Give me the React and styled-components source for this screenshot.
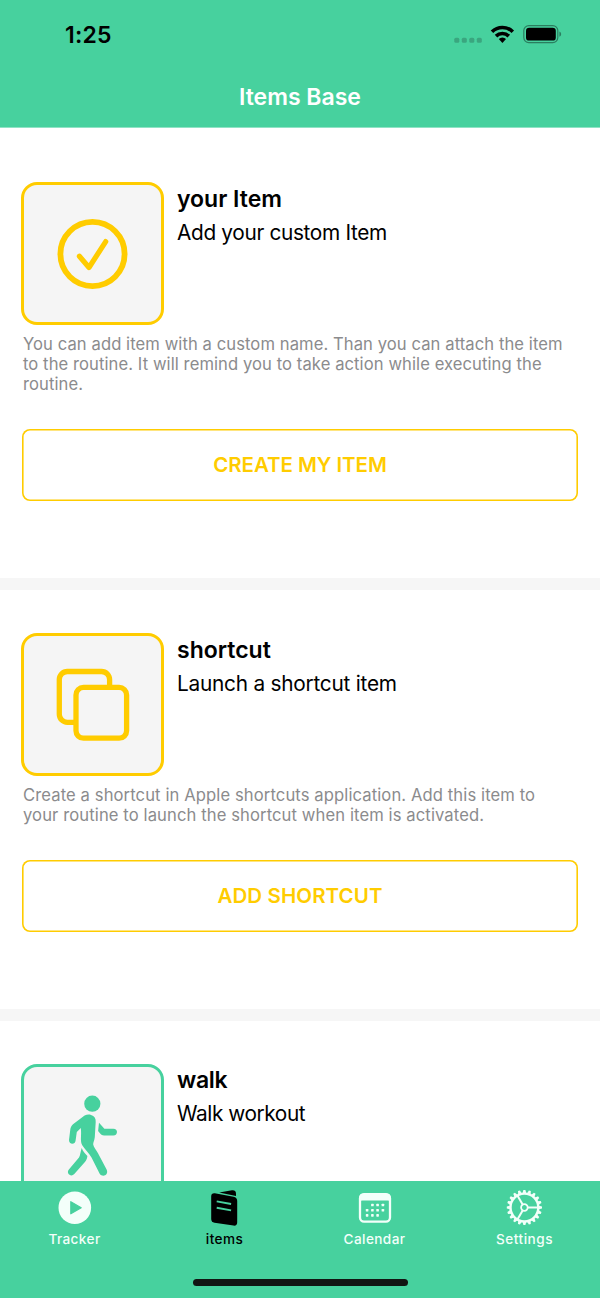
import React from "react";
import styled, { createGlobalStyle } from "styled-components";

const GREEN = "#47d19e";
const YELLOW = "#ffcc00";

const GlobalStyle = createGlobalStyle`
  * { box-sizing: border-box; }
  body { margin: 0; background: #fff; font-family: Inter, "Liberation Sans", sans-serif; }
`;

const Screen = styled.div`
  width: 600px;
  height: 1298px;
  display: flex;
  flex-direction: column;
  overflow: hidden;
  background: #fff;
`;

const Header = styled.header`
  flex: none;
  height: 128px;
  border-bottom: 1px solid #90e3c5;
  background: ${GREEN};
`;

const StatusBar = styled.div`
  height: 68px;
  padding: 0 38px 0 65px;
  display: flex;
  align-items: center;
  justify-content: space-between;
`;

const Time = styled.span`
  padding-top: 2px;
  font-size: 23px;
  line-height: 28px;
  font-weight: 600;
  letter-spacing: 0.2px;
`;

const StatusIcons = styled.svg`
  display: block;
  width: 110px;
  height: 24px;
`;

const NavTitle = styled.h1`
  margin: 0;
  padding-top: 15px;
  text-align: center;
  color: #fff;
  font-size: 23px;
  line-height: 28px;
  font-weight: 600;
  letter-spacing: 0;
`;

const List = styled.main`
  flex: 1;
  min-height: 0;
  overflow: hidden;
  padding-top: 11px;
`;

const Section = styled.section`
  padding: 43px 21px 77px;
  border-bottom: 12px solid #f6f6f6;
`;

const Summary = styled.div`
  display: flex;
  gap: 13px;
`;

const Tile = styled.div`
  flex: none;
  width: 143px;
  height: 143px;
  border: 3px solid ${(p) => p.$color};
  border-radius: 16px;
  background: #f5f5f5;
  color: ${(p) => p.$color};
  svg { display: block; width: 137px; height: 137px; }
`;

const Titles = styled.div`
  padding-top: ${(p) => p.$top || "2px"};
  white-space: nowrap;
`;

const Name = styled.h2`
  margin: 0;
  font-size: 23px;
  line-height: 30px;
  font-weight: 600;
  letter-spacing: ${(p) => p.$track || "0"};
`;

const Subtitle = styled.p`
  margin: 4.5px 0 0;
  font-size: 20.8px;
  line-height: 28px;
  letter-spacing: ${(p) => p.$track || "0"};
`;

const Description = styled.p`
  margin: 9px 0 35px;
  padding-left: 2px;
  color: #8b8b8d;
  font-size: 16.6px;
  line-height: 20px;
  letter-spacing: ${(p) => p.$track || "0"};
  white-space: nowrap;
`;

const Line = styled.span`
  display: block;
`;

const ActionButton = styled.button`
  display: block;
  width: 556px;
  height: 72px;
  margin-left: 1px;
  padding: 0;
  border: none;
  border-radius: 8px;
  box-shadow: inset 0 0 0 1.6px ${YELLOW};
  background: #fff;
  color: ${YELLOW};
  font: 600 20.5px/28px Inter, sans-serif;
  letter-spacing: ${(p) => p.$track || "0"};
`;

const TabBar = styled.nav`
  flex: none;
  height: 117px;
  background: ${GREEN};
`;

const Tabs = styled.div`
  display: grid;
  grid-template-columns: repeat(4, 150px);
  height: 98px;
`;

const Tab = styled.div`
  display: flex;
  flex-direction: column;
  align-items: center;
  padding-top: 6px;
  color: ${(p) => (p.$active ? "#000" : "#f3fffa")};
  svg { display: block; width: 40px; height: 40px; }
`;

const TabLabel = styled.span`
  margin: 3px 1px 0 0;
  font-size: 13.6px;
  line-height: 18px;
  font-weight: 500;
  letter-spacing: ${(p) => p.$track || "0.4px"};
`;

const HomeIndicator = styled.div`
  width: 215px;
  height: 7px;
  margin: 0 auto;
  border-radius: 4px;
  background: #111513;
`;

const StatusGlyphs = () => (
  <StatusIcons viewBox="452 22 110 24">
    <g fill="#3aa67f">
      <rect x="454.3" y="37.8" width="5" height="5" rx="1.5" />
      <rect x="461.8" y="37.8" width="5" height="5" rx="1.5" />
      <rect x="469.3" y="37.8" width="5" height="5" rx="1.5" />
      <rect x="476.8" y="37.8" width="5" height="5" rx="1.5" />
    </g>
    <g fill="none" stroke="#000" strokeWidth="3.6">
      <path d="M492 31.7a15 15 0 0 1 20.8 0" />
      <path d="M496 36.1a9.2 9.2 0 0 1 12.8 0" />
    </g>
    <path d="M498.8 39.1a5 5 0 0 1 7.2 0l-3.6 3.8z" fill="#000" />
    <rect x="523.8" y="25.6" width="34" height="17" rx="5" fill="none" stroke="#2b7e5f" strokeWidth="1.2" />
    <rect x="526" y="27.8" width="29.8" height="12.8" rx="3.2" fill="#000" />
    <path d="M559.4 31.5c2.3.8 2.3 4.4 0 5.2z" fill="#2b7e5f" />
  </StatusIcons>
);

const CheckGlyph = () => (
  <svg viewBox="24 185 137 137" fill="none" stroke="currentColor" strokeLinecap="round" strokeLinejoin="round">
    <circle cx="92.5" cy="254" r="32.1" strokeWidth="5.8" />
    <path d="M79.4 256.2L89 267.5L105.7 241.6" strokeWidth="5.2" />
  </svg>
);

const CopyGlyph = () => (
  <svg viewBox="24 636 137 137" fill="none" stroke="currentColor" strokeWidth="5.3">
    <path d="M109.6 686V679.5a8 8 0 0 0-8-8H67.3a8 8 0 0 0-8 8V714.3a8 8 0 0 0 8 8H75" />
    <rect x="76" y="687.4" width="50.6" height="50.8" rx="7.5" />
  </svg>
);

const WalkGlyph = () => (
  <svg viewBox="24 1067 137 137" fill="currentColor">
    <circle cx="92.3" cy="1103.7" r="8.1" />
    <path d="M84.6 1115.6C86.7 1114.6 89 1114.3 91 1115C94.4 1116.1 96 1118.4 95.7 1122L94.8 1137C94.6 1140 93 1142.6 93.2 1144.5C93.5 1147 96.5 1150.5 98 1153.2L106.6 1169.6C109.2 1175 102.6 1178 99.7 1173.8L91.5 1157.5C89.3 1153.5 85 1149.6 82.4 1145.5C79.7 1141 81.8 1135.5 80.8 1128L76.8 1132L75.6 1140.5C75.2 1145.1 68.7 1144.6 69 1140L70.3 1129.5C70.6 1127.2 71.3 1126 73 1124.2Z" />
    <path d="M99 1122.8L104.4 1128.8H113.4C118.2 1128.8 118.2 1135.5 113.4 1135.5H104C102.3 1135.5 101.5 1135 100.4 1133.8L98.1 1131.1Z" />
    <path d="M81.7 1147.9C83 1151.4 85.3 1153.5 87.4 1156C87 1159 86.3 1160.4 84.7 1162.3L74.3 1174.1C70.9 1177.6 65.8 1173.2 68.9 1169.5L79 1157.6C80.5 1154.7 80.4 1151.5 81.7 1147.9Z" />
  </svg>
);

const TrackerGlyph = () => (
  <svg viewBox="55 1187 40 40">
    <circle cx="74.8" cy="1207.7" r="16.3" fill="currentColor" />
    <path d="M70.8 1201.7L81.2 1207.7L70.8 1213.8Z" fill={GREEN} stroke={GREEN} strokeWidth="1.2" strokeLinejoin="round" />
  </svg>
);

const ItemsGlyph = () => (
  <svg viewBox="205 1187 40 40">
    <path d="M219.2 1192.6L232 1190.2Q235.8 1189.8 236 1193.4V1196.1Z" fill="currentColor" />
    <path d="M214.8 1193.3L233.6 1196.8Q237.2 1197.6 237.2 1201V1222.2Q237.2 1226 233.5 1225.6L214.5 1222.7Q211.2 1222 211.2 1219V1196.5Q211.2 1193 214.8 1193.3Z" fill="currentColor" />
    <path d="M216.7 1201.4L231.1 1204M216.7 1207.7L231.1 1210.4" stroke={GREEN} strokeWidth="1.9" />
  </svg>
);

const calendarDots = [
  [372.4, 1205], [377.6, 1205], [382.9, 1205],
  [367.1, 1210.2], [372.4, 1210.2], [377.6, 1210.2], [382.9, 1210.2],
  [367.1, 1215.4], [372.4, 1215.4], [377.6, 1215.4],
];

const CalendarGlyph = () => (
  <svg viewBox="355 1187 40 40">
    <rect x="360" y="1194.2" width="30" height="27.4" rx="4" fill="none" stroke="currentColor" strokeWidth="2.3" />
    <path d="M359.3 1201.5V1197.5Q359.3 1193.5 363.3 1193.5H386.7Q390.7 1193.5 390.7 1197.5V1201.5Q390 1200.4 387.5 1200.4H362.5Q360 1200.4 359.3 1201.5Z" fill="currentColor" />
    {calendarDots.map(([x, y]) => (
      <rect key={`${x}-${y}`} x={x - 1.3} y={y - 1.3} width="2.6" height="2.6" rx="0.6" fill="currentColor" />
    ))}
  </svg>
);

const teeth = Array.from({ length: 20 }, (_, i) => i * 18);

const SettingsGlyph = () => (
  <svg viewBox="-19.4 -20.5 40 40" fill="none" stroke="currentColor">
    <circle r="13.9" strokeWidth="2.4" />
    <circle r="3.3" strokeWidth="1.8" />
    {teeth.map((a) => (
      <path key={a} d="M14.5 -1.8L17.6 -1V1L14.5 1.8Z" fill="currentColor" stroke="none" transform={`rotate(${a})`} />
    ))}
    {[0, 120, 240].map((a) => (
      <path key={a} d="M3.5 0H14" strokeWidth="2" transform={`rotate(${a})`} />
    ))}
  </svg>
);

const items = [
  {
    name: "your Item", subtitle: "Add your custom Item", color: YELLOW, glyph: <CheckGlyph />,
    subTrack: "-0.33px", descTrack: "0.08px",
    lines: [
      "You can add item with a custom name. Than you can attach the item",
      "to the routine. It will remind you to take action while executing the",
      "routine.",
    ],
    action: "CREATE MY ITEM",
    actionTrack: "-0.05px",
  },
  {
    name: "shortcut", subtitle: "Launch a shortcut item", color: YELLOW, glyph: <CopyGlyph />,
    subTrack: "-0.23px", descTrack: "0.105px",
    lines: [
      "Create a shortcut in Apple shortcuts application. Add this item to",
      "your routine to launch the shortcut when item is activated.",
    ],
    action: "ADD SHORTCUT",
    actionTrack: "0.1px",
  },
  {
    name: "walk", subtitle: "Walk workout", color: GREEN, glyph: <WalkGlyph />,
    top: "1px", nameTrack: "-0.3px", subTrack: "-0.42px", lines: [],
  },
];

const tabs = [
  { label: "Tracker", glyph: <TrackerGlyph />, track: "0.4px" },
  { label: "items", glyph: <ItemsGlyph />, active: true, track: "0.4px" },
  { label: "Calendar", glyph: <CalendarGlyph /> },
  { label: "Settings", glyph: <SettingsGlyph />, track: "0.5px" },
];

export default function App() {
  return (
    <>
      <GlobalStyle />
      <Screen>
        <Header>
          <StatusBar>
            <Time>1:25</Time>
            <StatusGlyphs />
          </StatusBar>
          <NavTitle>Items Base</NavTitle>
        </Header>
        <List>
          {items.map((item) => (
            <Section key={item.name}>
              <Summary>
                <Tile $color={item.color}>{item.glyph}</Tile>
                <Titles $top={item.top}>
                  <Name $track={item.nameTrack}>{item.name}</Name>
                  <Subtitle $track={item.subTrack}>{item.subtitle}</Subtitle>
                </Titles>
              </Summary>
              {item.lines.length > 0 && (
                <Description $track={item.descTrack}>
                  {item.lines.map((text) => (
                    <Line key={text}>{text}</Line>
                  ))}
                </Description>
              )}
              {item.action && <ActionButton $track={item.actionTrack}>{item.action}</ActionButton>}
            </Section>
          ))}
        </List>
        <TabBar>
          <Tabs>
            {tabs.map((tab) => (
              <Tab key={tab.label} $active={tab.active}>
                {tab.glyph}
                <TabLabel $track={tab.track}>{tab.label}</TabLabel>
              </Tab>
            ))}
          </Tabs>
          <HomeIndicator />
        </TabBar>
      </Screen>
    </>
  );
}
